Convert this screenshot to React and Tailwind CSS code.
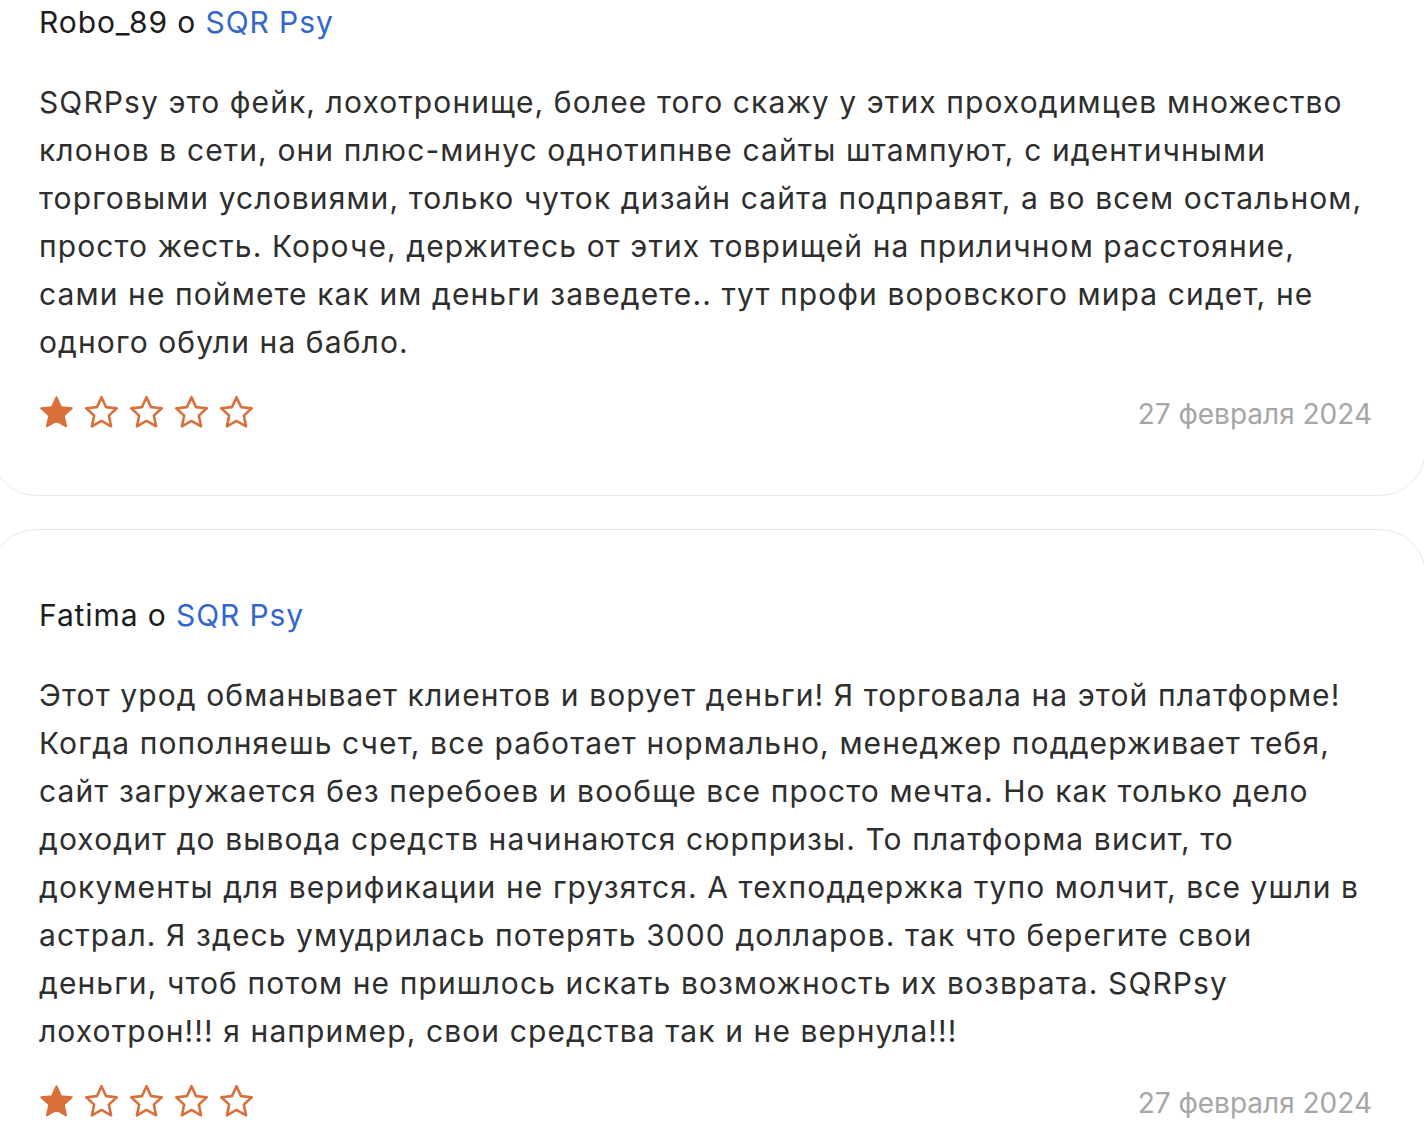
import React from 'react';

// line breaks follow the original layout
const reviews = [
  {
    id: 1,
    author: 'Robo_89',
    company: 'SQR Psy',
    lines: [
      'SQRPsy это фейк, лохотронище, более того скажу у этих проходимцев множество',
      'клонов в сети, они плюс-минус однотипнве сайты штампуют, с идентичными',
      'торговыми условиями, только чуток дизайн сайта подправят, а во всем остальном,',
      'просто жесть. Короче, держитесь от этих товрищей на приличном расстояние,',
      'сами не поймете как им деньги заведете.. тут профи воровского мира сидет, не',
      'одного обули на бабло.',
    ],
    rating: 1,
    date: '27 февраля 2024',
  },
  {
    id: 2,
    author: 'Fatima',
    company: 'SQR Psy',
    lines: [
      'Этот урод обманывает клиентов и ворует деньги! Я торговала на этой платформе!',
      'Когда пополняешь счет, все работает нормально, менеджер поддерживает тебя,',
      'сайт загружается без перебоев и вообще все просто мечта. Но как только дело',
      'доходит до вывода средств начинаются сюрпризы. То платформа висит, то',
      'документы для верификации не грузятся. А техподдержка тупо молчит, все ушли в',
      'астрал. Я здесь умудрилась потерять 3000 долларов. так что берегите свои',
      'деньги, чтоб потом не пришлось искать возможность их возврата. SQRPsy',
      'лохотрон!!! я например, свои средства так и не вернула!!!',
    ],
    rating: 1,
    date: '27 февраля 2024',
  },
];

const Star = ({ filled }) => (
  <svg width="39" height="39" viewBox="0 0 24 24" className="shrink-0">
    <path
      d="M12 2.6l2.8 6.1 6.6.7-4.9 4.5 1.4 6.6L12 17.2l-5.9 3.3 1.4-6.6-4.9-4.5 6.6-.7z"
      fill={filled ? '#d9703b' : 'none'}
      stroke="#d9703b"
      strokeWidth={filled ? 1.2 : 1.6}
      strokeLinejoin="round"
    />
  </svg>
);

const ReviewCard = ({ review }) => (
  <div className="border border-[#e9e9e9] rounded-[46px] pl-[48px] pr-[53px] pt-[61px] pb-[61px] bg-white">
    <div className="text-[30px] leading-[48px] tracking-[0.9px] text-[#1c1c1c]">
      {review.author} о <span className="text-[#3366cc]">{review.company}</span>
    </div>
    <p className="mt-8 text-[30px] leading-[48px] tracking-[1.1px] text-[#2e2e2e]">
      {review.lines.map((line, i) => (
        <span key={i} className="block whitespace-nowrap">
          {line}
        </span>
      ))}
    </p>
    <div className="mt-[24px] flex items-center justify-between">
      <div className="flex items-center gap-[6px] -ml-[2px]">
        {[1, 2, 3, 4, 5].map((n) => (
          <Star key={n} filled={n <= review.rating} />
        ))}
      </div>
      <div className="text-[28px] leading-[40px] text-[#a6a6a6] mt-[4px]">{review.date}</div>
    </div>
  </div>
);

const App = () => {
  return (
    <div
      className="bg-white h-[1126px] overflow-hidden"
      style={{ fontFamily: 'Inter, "Noto Sans", sans-serif' }}
    >
      <div className="-mt-[64px] -ml-[10px] -mr-[2px] flex flex-col gap-[33px]">
        {reviews.map((r) => (
          <ReviewCard key={r.id} review={r} />
        ))}
      </div>
    </div>
  );
};

export default App;
